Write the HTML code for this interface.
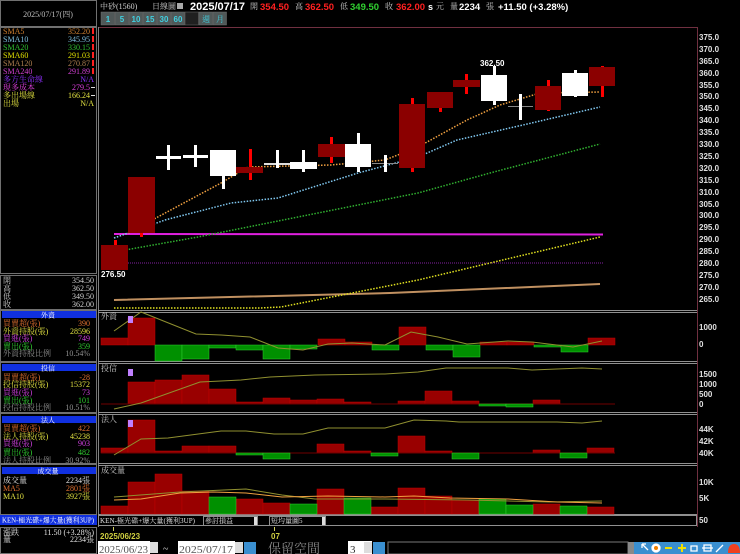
<!DOCTYPE html>
<html><head><meta charset="utf-8"><style>
html,body{margin:0;padding:0;background:#000;width:740px;height:554px;overflow:hidden}
svg{display:block}
text{font-family:"Liberation Serif","Noto Serif CJK TC",serif;font-size:8px}
.b{font-family:"Liberation Sans","Noto Sans CJK TC",sans-serif;font-weight:bold}
</style></head><body>
<svg width="740" height="554" viewBox="0 0 740 554" xmlns="http://www.w3.org/2000/svg">
<rect width="740" height="554" fill="#000"/>
<g fill="none" stroke="#707070" stroke-width="1">
<rect x="0.5" y="0.5" width="96" height="26"/>
<rect x="0.5" y="27.5" width="96" height="246"/>
<rect x="0.5" y="275.5" width="96" height="34"/>
<rect x="0.5" y="310.5" width="96" height="51"/>
<rect x="0.5" y="362.5" width="96" height="50"/>
<rect x="0.5" y="413.5" width="96" height="50"/>
<rect x="0.5" y="464.5" width="96" height="50"/>
<rect x="0.5" y="527.5" width="96" height="26"/>
</g>
<text x="48" y="17" fill="#c0c0c0" text-anchor="middle">2025/07/17(四)</text>
<g>
<text x="3" y="34" fill="#d08030">SMA5</text><text x="90" y="34" fill="#d08030" text-anchor="end">352.20</text>
<text x="3" y="42" fill="#80c0e0">SMA10</text><text x="90" y="42" fill="#80c0e0" text-anchor="end">345.95</text>
<text x="3" y="50" fill="#30c030">SMA20</text><text x="90" y="50" fill="#30c030" text-anchor="end">330.15</text>
<text x="3" y="58" fill="#e0e000">SMA60</text><text x="90" y="58" fill="#e0e000" text-anchor="end">291.03</text>
<text x="3" y="66" fill="#b08050">SMA120</text><text x="90" y="66" fill="#b08050" text-anchor="end">270.87</text>
<text x="3" y="74" fill="#d040d0">SMA240</text><text x="90" y="74" fill="#d040d0" text-anchor="end">291.89</text>
<text x="3" y="82" fill="#9030ff">多方生命線</text><text x="94" y="82" fill="#9030ff" text-anchor="end">N/A</text>
<text x="3" y="90" fill="#e040e0">現多成本</text><text x="90" y="90" fill="#e040e0" text-anchor="end">279.5</text>
<text x="3" y="98" fill="#e0e040">多出場線</text><text x="90" y="98" fill="#e0e040" text-anchor="end">166.24</text>
<text x="3" y="106" fill="#e0e040">出場</text><text x="94" y="106" fill="#e0e040" text-anchor="end">N/A</text>
<g fill="#ff2020"><rect x="92" y="28" width="2" height="6"/><rect x="92" y="36" width="2" height="6"/><rect x="92" y="44" width="2" height="6"/><rect x="92" y="52" width="2" height="6"/><rect x="92" y="60" width="2" height="6"/><rect x="92" y="68" width="2" height="6"/></g>
<rect x="91" y="87" width="4" height="1" fill="#ddd"/><rect x="91" y="95" width="4" height="1" fill="#ddd"/>
</g>
<g fill="#d0d0d0">
<text x="3" y="283">開</text><text x="94" y="283" text-anchor="end">354.50</text>
<text x="3" y="291">高</text><text x="94" y="291" text-anchor="end">362.50</text>
<text x="3" y="299">低</text><text x="94" y="299" text-anchor="end">349.50</text>
<text x="3" y="307">收</text><text x="94" y="307" text-anchor="end">362.00</text>
</g>
<g fill="#1030e0"><rect x="2" y="311" width="94" height="7"/><rect x="2" y="364" width="94" height="7"/><rect x="2" y="416" width="94" height="7"/><rect x="2" y="467" width="94" height="7"/><rect x="0" y="515" width="97" height="10"/></g>
<g fill="#fff" text-anchor="middle" style="font-size:7px"><text x="48" y="317.5" style="font-size:7px">外資</text><text x="48" y="370.5" style="font-size:7px">投信</text><text x="48" y="422.5" style="font-size:7px">法人</text><text x="48" y="473.5" style="font-size:7px">成交量</text></g>
<g style="font-size:7.5px">
<text x="3" y="326" fill="#e07030">買賣超(張)</text><text x="90" y="326" fill="#e07030" text-anchor="end">390</text>
<text x="3" y="334" fill="#e0e040">外資持股(張)</text><text x="90" y="334" fill="#e0e040" text-anchor="end">28596</text>
<text x="3" y="341" fill="#d040e0">買進(張)</text><text x="90" y="341" fill="#d040e0" text-anchor="end">749</text>
<text x="3" y="349" fill="#30d030">賣出(張)</text><text x="90" y="349" fill="#30d030" text-anchor="end">359</text>
<text x="3" y="356" fill="#909090">外資持股比例</text><text x="90" y="356" fill="#909090" text-anchor="end">10.54%</text>
<text x="3" y="380" fill="#e07030">買賣超(張)</text><text x="90" y="380" fill="#e07030" text-anchor="end">-28</text>
<text x="3" y="387" fill="#e0e040">投信持股(張)</text><text x="90" y="387" fill="#e0e040" text-anchor="end">15372</text>
<text x="3" y="395" fill="#d040e0">買進(張)</text><text x="90" y="395" fill="#d040e0" text-anchor="end">73</text>
<text x="3" y="403" fill="#30d030">賣出(張)</text><text x="90" y="403" fill="#30d030" text-anchor="end">101</text>
<text x="3" y="410" fill="#909090">投信持股比例</text><text x="90" y="410" fill="#909090" text-anchor="end">10.51%</text>
<text x="3" y="431" fill="#e07030">買賣超(張)</text><text x="90" y="431" fill="#e07030" text-anchor="end">422</text>
<text x="3" y="439" fill="#e0e040">法人持股(張)</text><text x="90" y="439" fill="#e0e040" text-anchor="end">45238</text>
<text x="3" y="446" fill="#d040e0">買進(張)</text><text x="90" y="446" fill="#d040e0" text-anchor="end">903</text>
<text x="3" y="455" fill="#30d030">賣出(張)</text><text x="90" y="455" fill="#30d030" text-anchor="end">482</text>
<text x="3" y="463" fill="#909090">法人持股比例</text><text x="90" y="463" fill="#909090" text-anchor="end">30.92%</text>
<text x="3" y="483" fill="#e0e0e0">成交量</text><text x="90" y="483" fill="#e0e0e0" text-anchor="end">2234張</text>
<text x="3" y="491" fill="#e07030">MA5</text><text x="90" y="491" fill="#e07030" text-anchor="end">2801張</text>
<text x="3" y="499" fill="#e0e040">MA10</text><text x="90" y="499" fill="#e0e040" text-anchor="end">3927張</text>
</g>
<text x="2" y="522.5" fill="#fff" style="font-size:7px" textLength="92" lengthAdjust="spacingAndGlyphs">KEN-極光碟+爆大量(獲利3UP)</text>
<text x="3" y="535" fill="#e0e0e0">漲跌</text><text x="94" y="535" fill="#e0e0e0" text-anchor="end">11.50 (+3.28%)</text>
<text x="3" y="542" fill="#e0e0e0">量</text><text x="94" y="542" fill="#e0e0e0" text-anchor="end">2234張</text>
<text x="100" y="9" fill="#d0d0d0">中砂(1560)</text>
<text x="152" y="9" fill="#d0d0d0">日線圖</text>
<rect x="177" y="3" width="6" height="6" fill="#aaa"/>
<text x="190" y="10" fill="#fff" class="b" style="font-size:11px">2025/07/17</text>
<text x="250" y="9" fill="#ccc">開</text><text x="260" y="10" fill="#ff2020" class="b" style="font-size:9.5px">354.50</text>
<text x="295" y="9" fill="#ccc">高</text><text x="305" y="10" fill="#ff2020" class="b" style="font-size:9.5px">362.50</text>
<text x="340" y="9" fill="#ccc">低</text><text x="350" y="10" fill="#30d030" class="b" style="font-size:9.5px">349.50</text>
<text x="385" y="9" fill="#ccc">收</text><text x="396" y="10" fill="#ff2020" class="b" style="font-size:9.5px">362.00</text>
<text x="428" y="10" fill="#fff" class="b" style="font-size:9px">s</text><text x="436" y="9" fill="#ccc">元</text>
<text x="450" y="9" fill="#ccc">量</text><text x="459" y="10" fill="#fff" class="b" style="font-size:9.5px">2234</text>
<text x="486" y="9" fill="#ccc">張</text>
<text x="498" y="10" fill="#fff" class="b" style="font-size:9.5px">+11.50 (+3.28%)</text>
<g fill="#505858" stroke="#707070" stroke-width="0.5">
<rect x="101" y="12" width="13.5" height="13"/><rect x="115" y="12" width="13.5" height="13"/><rect x="129" y="12" width="13.5" height="13"/><rect x="143" y="12" width="13.5" height="13"/><rect x="157" y="12" width="13.5" height="13"/><rect x="171" y="12" width="13.5" height="13"/><rect x="185" y="12" width="13.5" height="13" fill="#202020"/><rect x="199" y="12" width="13.5" height="13"/><rect x="213" y="12" width="13.5" height="13"/>
</g>
<g fill="#40d0e0" text-anchor="middle">
<text x="108" y="22" class="b">1</text><text x="122" y="22" class="b">5</text><text x="136" y="22" class="b">10</text><text x="150" y="22" class="b">15</text><text x="164" y="22" class="b">30</text><text x="178" y="22" class="b">60</text><text x="206" y="22">週</text><text x="220" y="22">月</text>
</g>
<line x1="98" y1="27.5" x2="697" y2="27.5" stroke="#703040"/>
<line x1="697.5" y1="27" x2="697.5" y2="527" stroke="#703040"/>
<line x1="98.5" y1="27" x2="98.5" y2="527" stroke="#808080"/>
<g stroke="#909090" stroke-width="1">
<line x1="98" y1="310.5" x2="697" y2="310.5"/><line x1="98" y1="312.5" x2="697" y2="312.5"/>
<line x1="98" y1="361.5" x2="697" y2="361.5"/><line x1="98" y1="363.5" x2="697" y2="363.5"/>
<line x1="98" y1="412.5" x2="697" y2="412.5"/><line x1="98" y1="414.5" x2="697" y2="414.5"/>
<line x1="98" y1="463.5" x2="697" y2="463.5"/><line x1="98" y1="465.5" x2="697" y2="465.5"/>
<line x1="98" y1="514.5" x2="697" y2="514.5"/>
</g>
<rect x="98.5" y="515.5" width="598" height="10" fill="none" stroke="#909090"/>
<g fill="#e0e0e0">
<text x="699" y="40" class="b">375.0</text><text x="699" y="52" class="b">370.0</text><text x="699" y="64" class="b">365.0</text><text x="699" y="76" class="b">360.0</text><text x="699" y="88" class="b">355.0</text><text x="699" y="99" class="b">350.0</text><text x="699" y="111" class="b">345.0</text><text x="699" y="123" class="b">340.0</text><text x="699" y="135" class="b">335.0</text><text x="699" y="147" class="b">330.0</text><text x="699" y="159" class="b">325.0</text><text x="699" y="171" class="b">320.0</text><text x="699" y="183" class="b">315.0</text><text x="699" y="195" class="b">310.0</text><text x="699" y="207" class="b">305.0</text><text x="699" y="218" class="b">300.0</text><text x="699" y="230" class="b">295.0</text><text x="699" y="242" class="b">290.0</text><text x="699" y="254" class="b">285.0</text><text x="699" y="266" class="b">280.0</text><text x="699" y="278" class="b">275.0</text><text x="699" y="290" class="b">270.0</text><text x="699" y="302" class="b">265.0</text>
<text x="699" y="330" class="b">1000</text><text x="699" y="347" class="b">0</text>
<text x="699" y="377" class="b">1500</text><text x="699" y="387" class="b">1000</text><text x="699" y="397" class="b">500</text><text x="699" y="407" class="b">0</text>
<text x="699" y="432" class="b">44K</text><text x="699" y="444" class="b">42K</text><text x="699" y="456" class="b">40K</text>
<text x="699" y="485" class="b">10K</text><text x="699" y="501" class="b">5K</text>
<text x="699" y="523" class="b">50</text>
</g>
<line x1="114" y1="234" x2="603" y2="234.5" stroke="#e020e0" stroke-width="2"/>
<line x1="114" y1="263" x2="603" y2="263" stroke="#8020a0" stroke-width="1" stroke-dasharray="1 1"/>
<polyline points="114,300 390,293 600,284" fill="none" stroke="#c09060" stroke-width="2"/>
<polyline points="114,308 260,308 281,307 418,280 600,237" fill="none" stroke="#e0e020" stroke-width="1.5" stroke-dasharray="1.5 1.5"/>
<polyline points="114,252 198,237 298,217 418,193 490,173 600,144" fill="none" stroke="#30b030" stroke-width="1.5" stroke-dasharray="1.5 1.5"/>
<polyline points="114,238 165,220 231,203 278,198 358,173 418,157 457,140 523,125 600,107" fill="none" stroke="#80c8f0" stroke-width="1.5" stroke-dasharray="1.5 1.5"/>
<polyline points="128,233 221,183 248,167 331,165 385,160 418,147 467,120 500,105 540,93 600,92" fill="none" stroke="#f0a040" stroke-width="1.5" stroke-dasharray="1.5 1.5"/>
<g>
<rect x="114" y="240" width="3" height="6" fill="#f00"/><rect x="101" y="245" width="27" height="25" fill="#8b0000"/>
<rect x="140" y="230" width="3" height="7" fill="#f00"/><rect x="128" y="177" width="27" height="56" fill="#8b0000"/>
<rect x="156" y="156" width="25" height="3" fill="#fff"/><rect x="167" y="145" width="3" height="25" fill="#fff"/>
<rect x="183" y="155" width="25" height="3" fill="#fff"/><rect x="194" y="145" width="3" height="22" fill="#fff"/>
<rect x="210" y="150" width="26" height="26" fill="#fff"/><rect x="222" y="175" width="3" height="14" fill="#fff"/>
<rect x="249" y="149" width="3" height="31" fill="#f00"/><rect x="236" y="167" width="27" height="6" fill="#8b0000"/><rect x="249" y="149" width="3" height="18" fill="#f00"/>
<rect x="264" y="163" width="26" height="2" fill="#ddd"/><rect x="276" y="150" width="3" height="18" fill="#fff"/>
<rect x="290" y="162" width="27" height="7" fill="#fff"/><rect x="302" y="150" width="3" height="22" fill="#fff"/>
<rect x="330" y="137" width="3" height="26" fill="#f00"/><rect x="318" y="144" width="27" height="13" fill="#8b0000"/>
<rect x="357" y="133" width="3" height="39" fill="#fff"/><rect x="345" y="144" width="26" height="23" fill="#fff"/>
<rect x="372" y="163" width="26" height="1" fill="#888"/><rect x="384" y="155" width="3" height="17" fill="#fff"/>
<rect x="411" y="98" width="3" height="74" fill="#f00"/><rect x="399" y="104" width="26" height="64" fill="#8b0000"/>
<rect x="439" y="106" width="3" height="6" fill="#f00"/><rect x="427" y="92" width="26" height="16" fill="#8b0000"/>
<rect x="465" y="74" width="3" height="20" fill="#f00"/><rect x="453" y="80" width="27" height="7" fill="#8b0000"/>
<rect x="493" y="66" width="3" height="39" fill="#fff"/><rect x="481" y="75" width="26" height="26" fill="#fff"/>
<rect x="508" y="106" width="25" height="1" fill="#888"/><rect x="519" y="94" width="3" height="26" fill="#fff"/>
<rect x="547" y="80" width="3" height="31" fill="#f00"/><rect x="535" y="86" width="26" height="24" fill="#8b0000"/>
<rect x="574" y="70" width="3" height="27" fill="#fff"/><rect x="562" y="73" width="26" height="23" fill="#fff"/>
<rect x="601" y="66" width="3" height="31" fill="#f00"/><rect x="589" y="67" width="26" height="19" fill="#8b0000"/>
</g>
<text x="480" y="66" fill="#fff" class="b">362.50</text>
<text x="101" y="277" fill="#fff" class="b">276.50</text>
<g fill="#990000" stroke="#c00000" stroke-width="0.5">
<rect x="101" y="338" width="27" height="7"/><rect x="128" y="318" width="27" height="27"/>
<rect x="318" y="339" width="27" height="6"/><rect x="345" y="342" width="27" height="3"/>
<rect x="399" y="327" width="27" height="18"/><rect x="480" y="342" width="27" height="3"/><rect x="507" y="342" width="27" height="3"/><rect x="588" y="338" width="27" height="7"/>
</g>
<g fill="#009000" stroke="#30d030" stroke-width="0.5">
<rect x="155" y="345" width="27" height="16"/><rect x="182" y="345" width="27" height="14"/><rect x="209" y="345" width="27" height="3"/><rect x="236" y="345" width="27" height="5"/><rect x="263" y="345" width="27" height="14"/><rect x="290" y="345" width="27" height="4"/><rect x="372" y="345" width="27" height="5"/><rect x="426" y="345" width="27" height="5"/><rect x="453" y="345" width="27" height="12"/><rect x="534" y="345" width="27" height="2"/><rect x="561" y="345" width="27" height="7"/>
</g>
<polyline points="114,331 141,312 196,334 221,335 250,337 278,348 303,350 328,344 352,343 385,345 411,332 438,337 467,344 508,341 532,342 573,347 602,341" fill="none" stroke="#909030" stroke-width="1"/>
<g fill="#990000" stroke="#c00000" stroke-width="0.5">
<rect x="128" y="382" width="27" height="22"/><rect x="155" y="380" width="27" height="24"/><rect x="182" y="375" width="27" height="29"/><rect x="209" y="389" width="27" height="15"/><rect x="236" y="402" width="27" height="2"/><rect x="263" y="398" width="27" height="6"/><rect x="290" y="400" width="27" height="4"/><rect x="317" y="399" width="27" height="5"/><rect x="344" y="402" width="27" height="2"/><rect x="398" y="401" width="27" height="3"/><rect x="425" y="391" width="27" height="13"/><rect x="452" y="401" width="27" height="3"/><rect x="533" y="400" width="27" height="4"/>
</g>
<line x1="101" y1="404" x2="615" y2="404" stroke="#700000"/>
<g fill="#009000" stroke="#30d030" stroke-width="0.5"><rect x="479" y="404" width="27" height="2"/><rect x="506" y="404" width="27" height="3"/></g>
<polyline points="114,409 141,403 200,382 221,381 241,380 270,377 315,375 385,374 418,372 446,368 508,368 532,370 582,368 602,369" fill="none" stroke="#909030" stroke-width="1"/>
<g fill="#990000" stroke="#c00000" stroke-width="0.5">
<rect x="101" y="448" width="27" height="5"/><rect x="128" y="420" width="27" height="33"/><rect x="155" y="451" width="27" height="2"/><rect x="182" y="446" width="27" height="7"/><rect x="209" y="446" width="27" height="7"/><rect x="317" y="444" width="27" height="9"/><rect x="344" y="451" width="27" height="2"/><rect x="398" y="436" width="27" height="17"/><rect x="425" y="451" width="27" height="2"/><rect x="533" y="450" width="27" height="3"/><rect x="587" y="448" width="27" height="5"/>
</g>
<line x1="101" y1="453" x2="615" y2="453" stroke="#700000"/>
<g fill="#009000" stroke="#30d030" stroke-width="0.5"><rect x="236" y="453" width="27" height="2"/><rect x="263" y="453" width="27" height="6"/><rect x="371" y="453" width="27" height="3"/><rect x="452" y="453" width="27" height="6"/><rect x="560" y="453" width="27" height="5"/></g>
<rect x="128" y="420" width="5" height="7" fill="#c080ff"/><rect x="128" y="369" width="5" height="7" fill="#c080ff"/><rect x="128" y="316" width="5" height="7" fill="#c080ff"/>
<polyline points="114,455 141,439 168,438 221,431 246,431 274,434 303,434 328,428 385,428 414,420 446,421 459,422 557,422 582,423 602,421" fill="none" stroke="#909030" stroke-width="1"/>
<g fill="#990000" stroke="#c00000" stroke-width="0.5">
<rect x="101" y="506" width="27" height="8"/><rect x="128" y="482" width="27" height="32"/><rect x="155" y="474" width="27" height="40"/><rect x="182" y="491" width="27" height="23"/><rect x="236" y="499" width="27" height="15"/><rect x="263" y="503" width="27" height="11"/><rect x="317" y="489" width="27" height="25"/><rect x="371" y="507" width="27" height="7"/><rect x="398" y="488" width="27" height="26"/><rect x="425" y="496" width="27" height="18"/><rect x="452" y="500" width="27" height="14"/><rect x="533" y="504" width="27" height="10"/><rect x="587" y="507" width="27" height="7"/>
</g>
<g fill="#009000" stroke="#30d030" stroke-width="0.5"><rect x="209" y="497" width="27" height="17"/><rect x="290" y="504" width="27" height="10"/><rect x="344" y="498" width="27" height="16"/><rect x="479" y="499" width="27" height="15"/><rect x="506" y="505" width="27" height="9"/><rect x="560" y="506" width="27" height="8"/></g>
<polyline points="114,497 180,492 246,489 282,495 315,499 385,499 467,500 549,502 602,501" fill="none" stroke="#909030" stroke-width="1"/>
<polyline points="114,500 141,499 180,493 213,492 246,493 282,497 328,496 385,497 414,496 450,498 508,499 557,502 602,503" fill="none" stroke="#f0a040" stroke-width="1"/>
<g fill="#d0d0d0"><text x="101" y="319">外資</text><text x="101" y="371">投信</text><text x="101" y="422">法人</text><text x="101" y="473">成交量</text></g>
<text x="100" y="523" fill="#e0e0e0" style="font-size:7px" textLength="95" lengthAdjust="spacingAndGlyphs">KEN-極光碟+爆大量(獲利3UP)</text>
<rect x="203.5" y="516.5" width="54" height="9" fill="#000" stroke="#909090"/><text x="205" y="523" fill="#e0e0e0" style="font-size:7px">參討損益</text><rect x="254" y="517" width="3" height="8" fill="#ddd"/>
<rect x="269.5" y="516.5" width="56" height="9" fill="#000" stroke="#909090"/><text x="271" y="523" fill="#e0e0e0" style="font-size:7px">短均量圖5</text><rect x="322" y="517" width="3" height="8" fill="#ddd"/>
<line x1="113.5" y1="527" x2="113.5" y2="531" stroke="#d0d060"/><line x1="274.5" y1="527" x2="274.5" y2="531" stroke="#d0d060"/>
<text x="100" y="539" fill="#d0d040" class="b">2025/06/23</text>
<text x="271" y="539" fill="#d0d040" class="b">07</text>
<rect x="98" y="541" width="52" height="13" fill="#fff"/><text x="99" y="553" fill="#555" style="font-size:11px" textLength="49" lengthAdjust="spacingAndGlyphs">2025/06/23</text>
<rect x="150" y="542" width="8" height="11" fill="#ddd"/>
<text x="163" y="552" fill="#ccc" style="font-size:10px">~</text>
<rect x="178" y="541" width="57" height="13" fill="#fff"/><text x="179" y="553" fill="#555" style="font-size:11px" textLength="54" lengthAdjust="spacingAndGlyphs">2025/07/17</text>
<rect x="235" y="542" width="8" height="11" fill="#ddd"/>
<rect x="244" y="542" width="12" height="12" fill="#3a8fd0"/>
<text x="268" y="553" fill="#888" style="font-size:13px">保留空間</text>
<rect x="348" y="541" width="24" height="13" fill="#fff"/><text x="350" y="553" fill="#333" style="font-size:11px">3</text>
<rect x="364" y="542" width="8" height="11" fill="#ddd"/>
<rect x="373" y="542" width="12" height="12" fill="#3a8fd0"/>
<rect x="388" y="542" width="240" height="12" fill="#000" stroke="#777"/>
<rect x="628" y="542" width="6" height="12" fill="#888"/>
<rect x="634" y="542" width="106" height="12" fill="#3a8fd0"/>
<g stroke="#fff" stroke-width="1.3" fill="none">
<path d="M642 544 l6 6 M642 544 h4 M642 544 v4"/>
<circle cx="656" cy="548" r="4" fill="#fff"/>
<path d="M665 548 h7" stroke="#f0e000" stroke-width="2"/>
<path d="M678 548 h8 M682 544 v8" stroke="#f0e000" stroke-width="2"/>
<path d="M691 546 h6 v5 h-6 z"/>
<path d="M704 545 h7 v6 h-7 z M702 548 h11"/>
<path d="M716 552 l7 -7"/>
</g>
<path d="M728 553 q0 -9 6 -9 q6 0 6 9 z" fill="#f04020"/>
<circle cx="656" cy="548" r="2" fill="#f08000"/>
</svg>
</body></html>
